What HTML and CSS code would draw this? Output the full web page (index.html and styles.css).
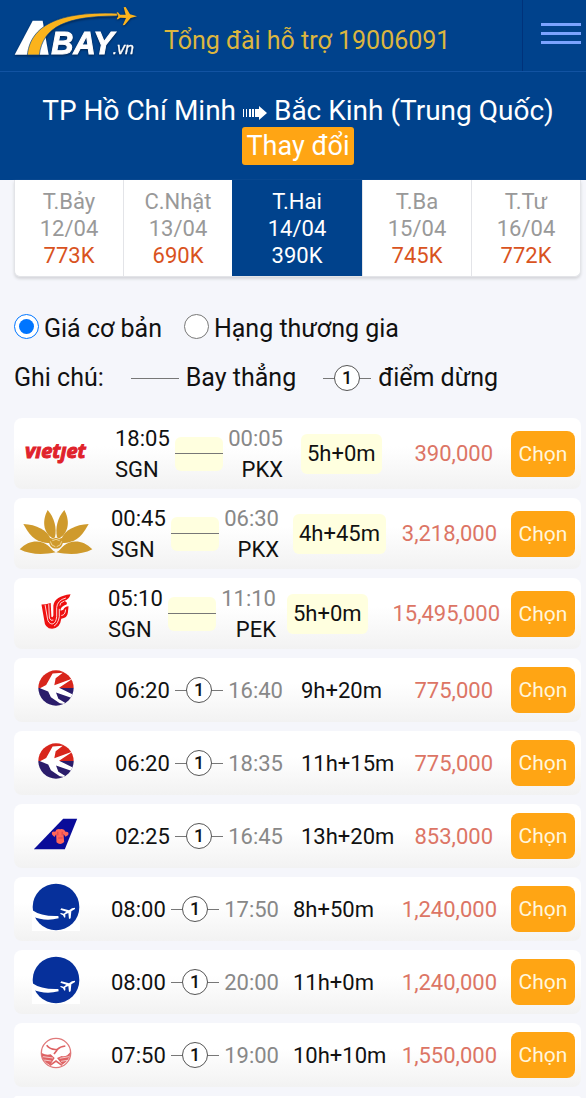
FILE: index.html
```
<!DOCTYPE html>
<html lang="vi">
<head>
	<meta charset="utf-8">
	<meta name="viewport" content="width=device-width, initial-scale=1">
	<title>Abay.vn - TP Hồ Chí Minh - Bắc Kinh</title>
	<link rel="stylesheet" href="styles.css">
</head>
<body>

<!-- airline logos -->
<svg class="sprite" width="0" height="0" aria-hidden="true">
	<symbol id="vietjet" viewBox="0 0 64 30">
		<text x="1" y="21" class="vietjet-text">vıetȷet</text>
	</symbol>
	<symbol id="vna" viewBox="56 293 222 138">
		<g fill="#cf9a2c">
			<path d="M158 382C126 362 126 326 142 296C162 318 170 350 164 378Z"/>
			<path d="M176 382C208 362 208 326 192 296C172 318 164 350 170 378Z"/>
			<path d="M150 395C105 395 88 372 69 338C108 340 142 356 151 384Z"/>
			<path d="M184 395C229 395 246 372 265 338C226 340 192 356 183 384Z"/>
			<path d="M58 414C86 384 122 386 142 402C151 409 154 417 166 423C130 431 90 431 58 414Z"/>
			<path d="M276 414C248 384 212 386 192 402C183 409 180 417 168 423C204 431 244 431 276 414Z"/>
			<path d="M146 384Q148 376 157 384Q167 374 177 384Q186 376 188 384Q190 402 178 409Q167 414 156 409Q144 402 146 384Z"/>
		</g>
		<path d="M150 390Q152 404 165 406M184 390Q182 404 169 406M156 388Q167 380 178 388" fill="none" stroke="#fff2cc" stroke-width="2"/>
	</symbol>
	<symbol id="airchina" viewBox="16 12 96 112">
		<path fill="#ee1111" d="M20 47L33 46L48 42L50 84Q54 88 56 80L56 50Q60 22 108 16Q104 32 88 36Q100 38 96 47Q88 50 82 54Q76 60 78 66L86 63Q90 52 102 52L100 72Q98 88 80 90Q76 120 52 120Q30 120 28 92Z"/>
		<path fill="none" stroke="#ffd9d9" stroke-width="3" d="M31 48L38 88Q40 104 52 106Q64 104 66 84V56Q68 34 94 27M42 46L44 88Q48 98 56 94M76 50Q74 42 88 37M74 60V84Q70 106 58 112M80 80Q92 80 93 62"/>
	</symbol>
	<clipPath id="eastern-clip"><circle cx="167" cy="111" r="52"/></clipPath>
	<symbol id="eastern" viewBox="114 58 106 106">
		<g clip-path="url(#eastern-clip)">
			<path fill="#d8261c" d="M114 58H220V111H114Z"/>
			<path fill="#2b1d6b" d="M114 111H220V164H114Z"/>
			<path fill="#fff" d="M120 112L138 102L157 68L187 66L166 82L162 103L218 82L176 110L218 131V142L167 124L174 143L203 160L178 156L152 138L144 121Z"/>
		</g>
	</symbol>
	<symbol id="southern" viewBox="100 501 134 96">
		<path fill="#0a0c99" d="M102 595L190 503H232L195 595Z"/>
		<path fill="#ff6659" d="M157 551Q153 540 166 542Q169 532 181 535Q193 532 197 542Q209 541 205 552L197 557L191 549L193 573Q181 584 170 574L169 550L164 558Z"/>
		<path fill="none" stroke="#c82f48" stroke-width="2" d="M174 542V553M187 542V553M175 561H188"/>
	</symbol>
	<symbol id="swoosh" viewBox="96 35 144 144">
		<path fill="#fff" d="M96 35H240V179H96Z"/>
		<circle cx="168" cy="107" r="70" fill="#06309b"/>
		<path fill="#fff" d="M96 116Q124 136 175 134L176 141Q133 152 96 134Z"/>
		<path fill="#fff" d="M225 109L216 111L207 117L184 111L181 115L199 121L191 127L183 125L180 127L189 132L193 139L196 138L196 129L205 125L207 143L212 141L214 120L225 113Z"/>
	</symbol>
	<symbol id="sichuan" viewBox="119 498 96 96">
		<circle cx="167" cy="546" r="44" fill="#fff" stroke="#e0797a" stroke-width="4"/>
		<path fill="#de6263" d="M124 546Q138 554 151 550L163 561L149 583Q124 569 124 546Z"/>
		<path fill="#de6263" d="M210 543Q199 559 184 555L170 561L186 581Q209 568 210 543Z"/>
		<path fill="none" stroke="#de6263" stroke-width="5" d="M139 523Q151 538 171 535Q179 527 195 525M171 536L161 549M149 583L167 570L185 583"/>
		<path fill="none" stroke="#fff" stroke-width="2" d="M128 557L158 561M132 567L153 570M206 557L178 562M201 568L182 571"/>
	</symbol>
</svg>

<header>
	<div class="topbar">
		<a href="#" class="brand" aria-label="Abay.vn">
			<svg class="brand-logo" viewBox="39 18 375 153">
				<path fill="#fff" d="M44 164L98 62H128L146 164Z"/>
				<path fill="#fbb31c" stroke="#00428c" stroke-width="2" d="M82 165C90 92 150 32 352 40V48C200 48 128 80 118 165Z"/>
				<path fill="#fbb31c" d="M411 49L390 43L377 21L371 22L377 44L360 44L354 37H350L355 48L350 58H354L361 53L378 54L368 76L374 75L392 54Z"/>
				<text x="154" y="163" class="brand-name">BAY</text>
				<text x="338" y="163" class="brand-tld">.vn</text>
			</svg>
		</a>
		<a href="tel:19006091" class="hotline">Tổng đài hỗ trợ 19006091</a>
		<button type="button" class="menu" aria-label="Menu"><span></span><span></span><span></span></button>
	</div>
	<div class="route">
		<h1>TP Hồ Chí Minh
			<svg class="arrow" viewBox="0 0 24 14" role="img" aria-label="đến"><path fill="#fff" d="M0 3H1V11H0ZM3 3H4V11H3ZM6 3H8V11H6ZM9 3H11V11H9ZM12 3H16V0L24 7L16 14V11H12Z"/></svg>
			Bắc Kinh (Trung Quốc)</h1>
		<a href="#" class="change">Thay đổi</a>
	</div>
</header>

<main>
	<nav class="days">
		<a href="#">T.Bảy<br>12/04<b>773K</b></a>
		<a href="#">C.Nhật<br>13/04<b>690K</b></a>
		<a href="#" class="active">T.Hai<br>14/04<b>390K</b></a>
		<a href="#">T.Ba<br>15/04<b>745K</b></a>
		<a href="#">T.Tư<br>16/04<b>772K</b></a>
	</nav>

	<form class="fare">
		<label><input type="radio" name="fare" checked>Giá cơ bản</label>
		<label><input type="radio" name="fare">Hạng thương gia</label>
	</form>

	<div class="legend">
		<span class="note">Ghi chú:</span>
		<span class="line"></span><span>Bay thẳng</span>
		<span class="line stop"><i>1</i></span><span>điểm dừng</span>
	</div>

	<section class="flights">
		<article class="flight direct">
			<svg class="logo" width="64" height="30" role="img" aria-label="Vietjet"><use href="#vietjet"/></svg>
			<div class="times"><span>18:05<br>SGN</span><span class="line"></span><span class="arrive"><em>00:05</em><br>PKX</span></div>
			<span class="duration">5h+0m</span>
			<span class="price">390,000</span>
			<button type="button">Chọn</button>
		</article>
		<article class="flight direct million">
			<svg class="logo" width="74" height="46" role="img" aria-label="Vietnam Airlines"><use href="#vna"/></svg>
			<div class="times"><span>00:45<br>SGN</span><span class="line"></span><span class="arrive"><em>06:30</em><br>PKX</span></div>
			<span class="duration">4h+45m</span>
			<span class="price">3,218,000</span>
			<button type="button">Chọn</button>
		</article>
		<article class="flight direct ten-million">
			<svg class="logo" width="32" height="37" role="img" aria-label="Air China"><use href="#airchina"/></svg>
			<div class="times"><span>05:10<br>SGN</span><span class="line"></span><span class="arrive"><em>11:10</em><br>PEK</span></div>
			<span class="duration">5h+0m</span>
			<span class="price">15,495,000</span>
			<button type="button">Chọn</button>
		</article>
		<article class="flight">
			<svg class="logo" width="36" height="36" role="img" aria-label="China Eastern"><use href="#eastern"/></svg>
			<div class="times"><span>06:20</span><span class="line stop"><i>1</i></span><span class="arrive"><em>16:40</em></span></div>
			<span class="duration">9h+20m</span>
			<span class="price">775,000</span>
			<button type="button">Chọn</button>
		</article>
		<article class="flight">
			<svg class="logo" width="36" height="36" role="img" aria-label="China Eastern"><use href="#eastern"/></svg>
			<div class="times"><span>06:20</span><span class="line stop"><i>1</i></span><span class="arrive"><em>18:35</em></span></div>
			<span class="duration">11h+15m</span>
			<span class="price">775,000</span>
			<button type="button">Chọn</button>
		</article>
		<article class="flight">
			<svg class="logo" width="45" height="32" role="img" aria-label="China Southern"><use href="#southern"/></svg>
			<div class="times"><span>02:25</span><span class="line stop"><i>1</i></span><span class="arrive"><em>16:45</em></span></div>
			<span class="duration">13h+20m</span>
			<span class="price">853,000</span>
			<button type="button">Chọn</button>
		</article>
		<article class="flight million">
			<svg class="logo" width="48" height="48" role="img" aria-label="Airline"><use href="#swoosh"/></svg>
			<div class="times"><span>08:00</span><span class="line stop"><i>1</i></span><span class="arrive"><em>17:50</em></span></div>
			<span class="duration">8h+50m</span>
			<span class="price">1,240,000</span>
			<button type="button">Chọn</button>
		</article>
		<article class="flight million">
			<svg class="logo" width="48" height="48" role="img" aria-label="Airline"><use href="#swoosh"/></svg>
			<div class="times"><span>08:00</span><span class="line stop"><i>1</i></span><span class="arrive"><em>20:00</em></span></div>
			<span class="duration">11h+0m</span>
			<span class="price">1,240,000</span>
			<button type="button">Chọn</button>
		</article>
		<article class="flight million">
			<svg class="logo" width="32" height="32" role="img" aria-label="Sichuan Airlines"><use href="#sichuan"/></svg>
			<div class="times"><span>07:50</span><span class="line stop"><i>1</i></span><span class="arrive"><em>19:00</em></span></div>
			<span class="duration">10h+10m</span>
			<span class="price">1,550,000</span>
			<button type="button">Chọn</button>
		</article>
		<div class="next"></div>
	</section>
</main>
</body>
</html>
```
FILE: styles.css
```
* {
	box-sizing: border-box;
}
body {
	margin: 0;
	background: #f5f6fb;
	color: #111;
	font-family: Roboto, "Liberation Sans", sans-serif;
	font-size: 22px;
}
a {
	color: inherit;
	text-decoration: none;
}
button {
	border: 0;
	font-family: inherit;
	cursor: pointer;
}
.sprite {
	display: block;
}

/* header */
header {
	background: #00428c;
	color: #fff;
}
.topbar {
	display: flex;
	height: 72px;
	border-bottom: 1px solid #1253a2;
}
.brand {
	padding: 6px 0 0 13px;
}
.brand-logo {
	display: block;
	overflow: visible;
	width: 125px;
	height: 51px;
	filter: drop-shadow(0 1px 1px #00224c);
}
.brand-name {
	fill: #fff;
	stroke: #fff;
	stroke-width: 3px;
	font: italic bold 92px "Liberation Sans", sans-serif;
}
.brand-tld {
	fill: #fff;
	stroke: #fff;
	stroke-width: 1px;
	font: italic 48px "Liberation Sans", sans-serif;
}
.hotline {
	flex: 1;
	padding: 10px 0 0 26px;
	color: #dcb63f;
	font-size: 25px;
	line-height: 62px;
	white-space: nowrap;
}
.menu {
	display: flex;
	flex-direction: column;
	gap: 6px;
	width: 64px;
	padding: 23px 5px 0 18px;
	background: none;
	border-left: 1px solid #00327a;
}
.menu span {
	height: 3px;
	background: #7ba3ff;
}
.route {
	padding: 23px 0 15px 10px;
	text-align: center;
	font-size: 27px;
}
h1 {
	margin: 0;
	font-size: 28px;
	font-weight: 400;
	line-height: 32px;
}
.arrow {
	width: 24px;
	height: 14px;
}
.change {
	display: block;
	width: fit-content;
	margin: 0 auto;
	padding: 0 4px;
	background: #ffa514;
	border-radius: 3px;
	line-height: 38px;
}

/* days */
main {
	padding: 0 5px 0 14px;
}
.days {
	display: flex;
	overflow: hidden;
	background: #fff;
	border: 1px solid #e3e4e8;
	border-top: 0;
	border-radius: 0 0 6px 6px;
	box-shadow: 0 2px 3px #d5d6da;
}
.days a {
	flex: 1;
	padding: 8px 0 7px;
	color: #999;
	line-height: 27px;
	text-align: center;
}
.days a + a {
	border-left: 1px solid #e3e4e8;
}
.days b {
	display: block;
	color: #d9531e;
	font-weight: 400;
}
.days .active {
	flex: 0 0 130px;
	background: #00428c;
	border: 0;
}
.days .active,
.days .active b {
	color: #fff;
}

/* fare class */
.fare {
	display: flex;
	gap: 22px;
	padding-top: 36px;
	font-size: 25px;
	line-height: 32px;
}
.fare label {
	display: flex;
	align-items: center;
}
.fare input {
	width: 25px;
	height: 25px;
	margin: 0 5px 6px 0;
}
.legend {
	display: flex;
	align-items: center;
	gap: 7px;
	padding: 16px 0 23px;
	font-size: 25px;
	line-height: 32px;
}
.note {
	margin-right: 20px;
}
.legend .stop {
	margin-left: 20px;
}

/* connecting line, with the number of stops on it */
.line {
	display: flex;
	align-items: center;
	justify-content: center;
	width: 48px;
	height: 34px;
	background: linear-gradient(#777, #777) center / 100% 1px no-repeat;
}
.line i {
	width: 26px;
	height: 26px;
	background: #fff;
	border: 1px solid #555;
	border-radius: 50%;
	font-size: 18px;
	font-style: normal;
	font-weight: 500;
	line-height: 24px;
	text-align: center;
}

/* flights */
.flights {
	display: grid;
	gap: 9px;
}
.flight {
	--gap: 18px;
	display: grid;
	grid-template-columns: 83px 168px 1fr auto 64px;
	align-items: center;
	column-gap: var(--gap);
	min-height: 64px;
	padding-right: 6px;
	background: linear-gradient(#fff 40%, #f2f2f2);
	border-radius: 8px;
}
.million {
	--gap: 14px;
}
.ten-million {
	--gap: 11px;
}
.direct {
	min-height: 71px;
}
.logo {
	justify-self: center;
	margin-bottom: 4px;
}
.times {
	display: grid;
	grid-template-columns: 1fr 48px 1fr;
	align-items: center;
	line-height: 31px;
}
.direct .line {
	background-color: #ffffdf;
	border-radius: 6px;
}
.arrive {
	text-align: right;
}
.arrive em {
	color: #888;
	font-style: normal;
}
.duration {
	justify-self: start;
	white-space: nowrap;
}
.direct .duration {
	padding: 0 6px;
	background: #ffffdf;
	border-radius: 6px;
	line-height: 40px;
}
.price {
	color: #dc7565;
}
.flight button {
	height: 46px;
	padding: 0;
	background: #ffa514;
	border-radius: 8px;
	color: #fff6dc;
	font-size: 21px;
}
.vietjet-text {
	fill: #e0222b;
	stroke: #e0222b;
	font: italic bold 20px "Open Sans", sans-serif;
}
.next {
	height: 3px;
	background: #fff;
	border-radius: 8px 8px 0 0;
}
```
